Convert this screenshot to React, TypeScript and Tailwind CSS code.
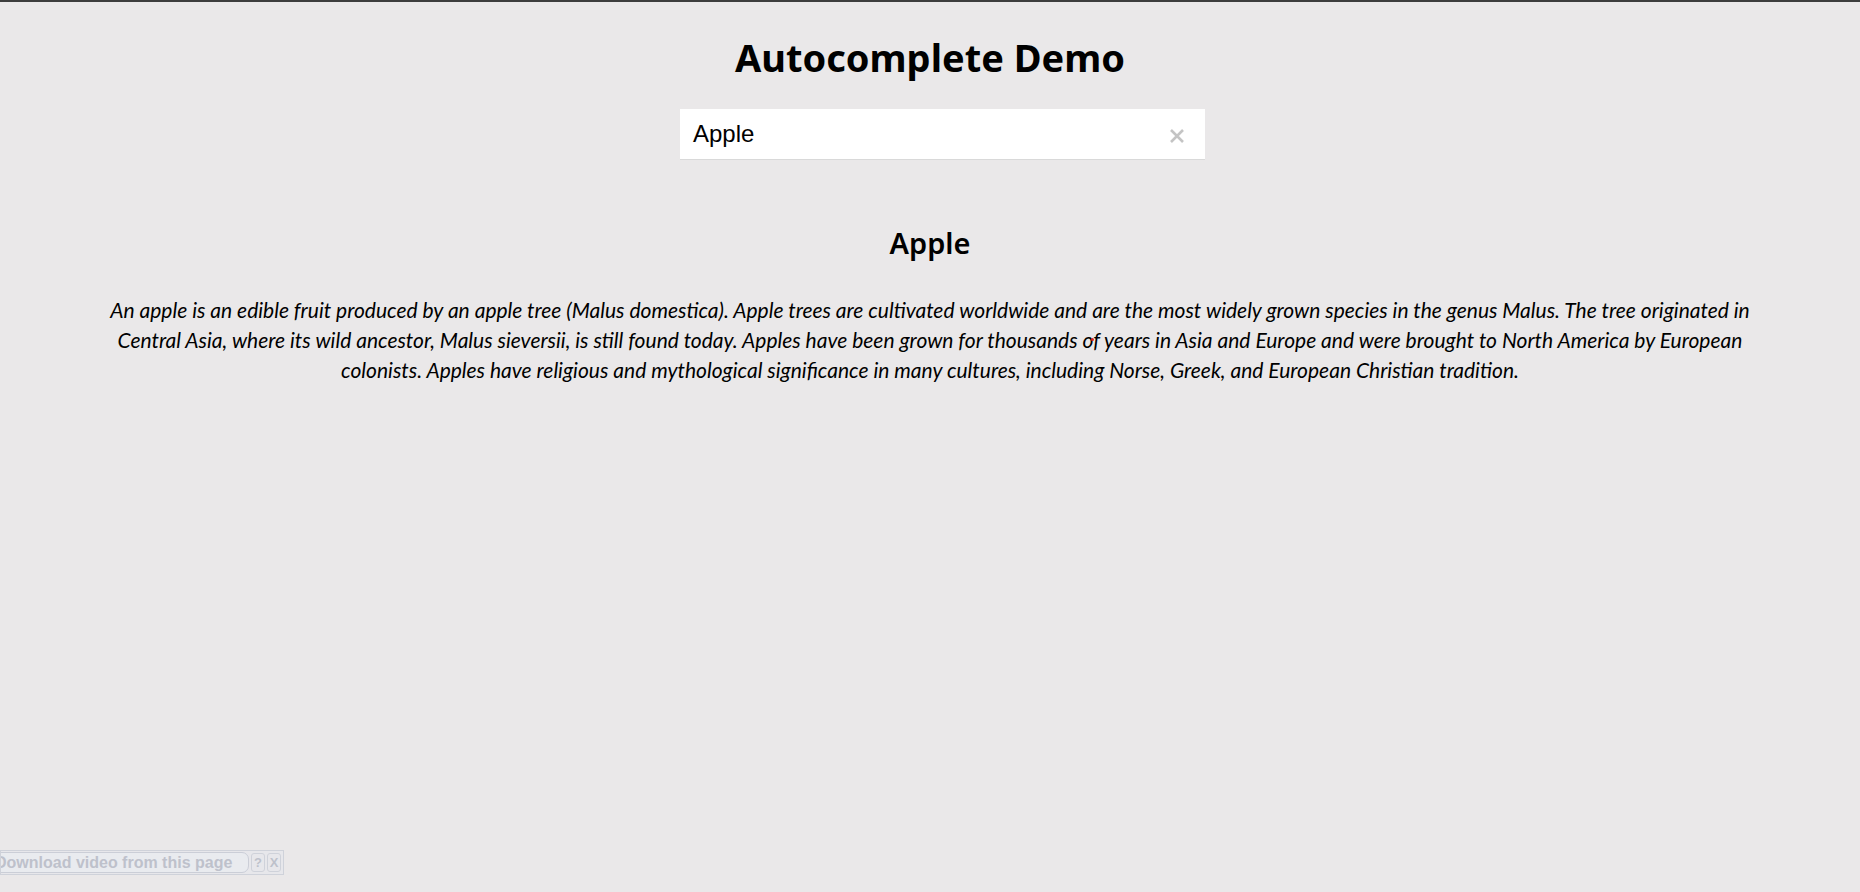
import { useState } from 'react';

const APPLE_TEXT = [
  'An apple is an edible fruit produced by an apple tree (Malus domestica). Apple trees are cultivated worldwide and are the most widely grown species in the genus Malus. The tree originated in',
  'Central Asia, where its wild ancestor, Malus sieversii, is still found today. Apples have been grown for thousands of years in Asia and Europe and were brought to North America by European',
  'colonists. Apples have religious and mythological significance in many cultures, including Norse, Greek, and European Christian tradition.',
];

function SearchBox({ value, onClear }: { value: string; onClear: () => void }) {
  return (
    <div className="ml-[680px] flex h-[51px] w-[525px] items-center border-b border-[#d9d9d9] bg-white pl-[13px] pr-[20px]">
      <span className="flex-1 font-['Liberation_Sans',Arial,sans-serif] text-[24px] leading-none text-black">
        {value}
      </span>
      <button type="button" onClick={onClear} aria-label="Clear" className="mt-[4px] text-[#c4c4c4]">
        <svg width="16" height="16" viewBox="0 0 16 16" fill="none" stroke="currentColor" strokeWidth={2.6}>
          <path d="M2 2l12 12M14 2L2 14" />
        </svg>
      </button>
    </div>
  );
}

export default function App() {
  const [query, setQuery] = useState('Apple');

  return (
    <div className="relative min-h-[892px] border-t-2 border-[#3d3d3d] bg-[#eae8e9] text-black">
      <h1 className="pt-[28px] text-center font-['Noto_Sans',sans-serif] text-[38px] font-bold leading-[54px]">
        Autocomplete Demo
      </h1>

      <div className="mt-[25px]">
        <SearchBox value={query} onClear={() => setQuery('')} />
      </div>

      <h2 className="mt-[63px] text-center font-['Noto_Sans',sans-serif] text-[29px] font-semibold leading-[40px]">
        Apple
      </h2>

      <p className="mt-[32px] text-center font-['Lato',sans-serif] text-[21px] italic leading-[30px]">
        {APPLE_TEXT.map((line, i) => (
          <span key={i} className="block whitespace-nowrap">
            {line}
          </span>
        ))}
      </p>

      {/* stray cursor dot */}
      <span className="absolute left-[1091px] top-[336px] h-[3px] w-[3px] rounded-full bg-[#e02020]" />

      {/* browser extension bar */}
      <div className="fixed bottom-[17px] left-0 flex h-[25px] w-[284px] items-center gap-[2px] overflow-hidden border border-[#c9ccd6] bg-[#e6e7ec] pr-[2px] opacity-80">
        <div className="-ml-[8px] flex h-[21px] w-[256px] shrink-0 items-center rounded-r-[7px] border border-[#c3c7d3] bg-[#e9ebf1] pl-[1px] font-['Liberation_Sans',Arial,sans-serif] text-[16px] font-bold whitespace-nowrap text-[#b3b7c4]">
          Download video from this page
        </div>
        <div className="flex h-[19px] w-[14px] shrink-0 items-center justify-center rounded-[3px] border border-[#c9ccd6] font-['Liberation_Sans',Arial,sans-serif] text-[13px] font-bold text-[#b3b7c4]">
          ?
        </div>
        <div className="flex h-[19px] w-[14px] shrink-0 items-center justify-center rounded-[3px] border border-[#c9ccd6] font-['Liberation_Sans',Arial,sans-serif] text-[13px] font-bold text-[#b3b7c4]">
          X
        </div>
      </div>
    </div>
  );
}
